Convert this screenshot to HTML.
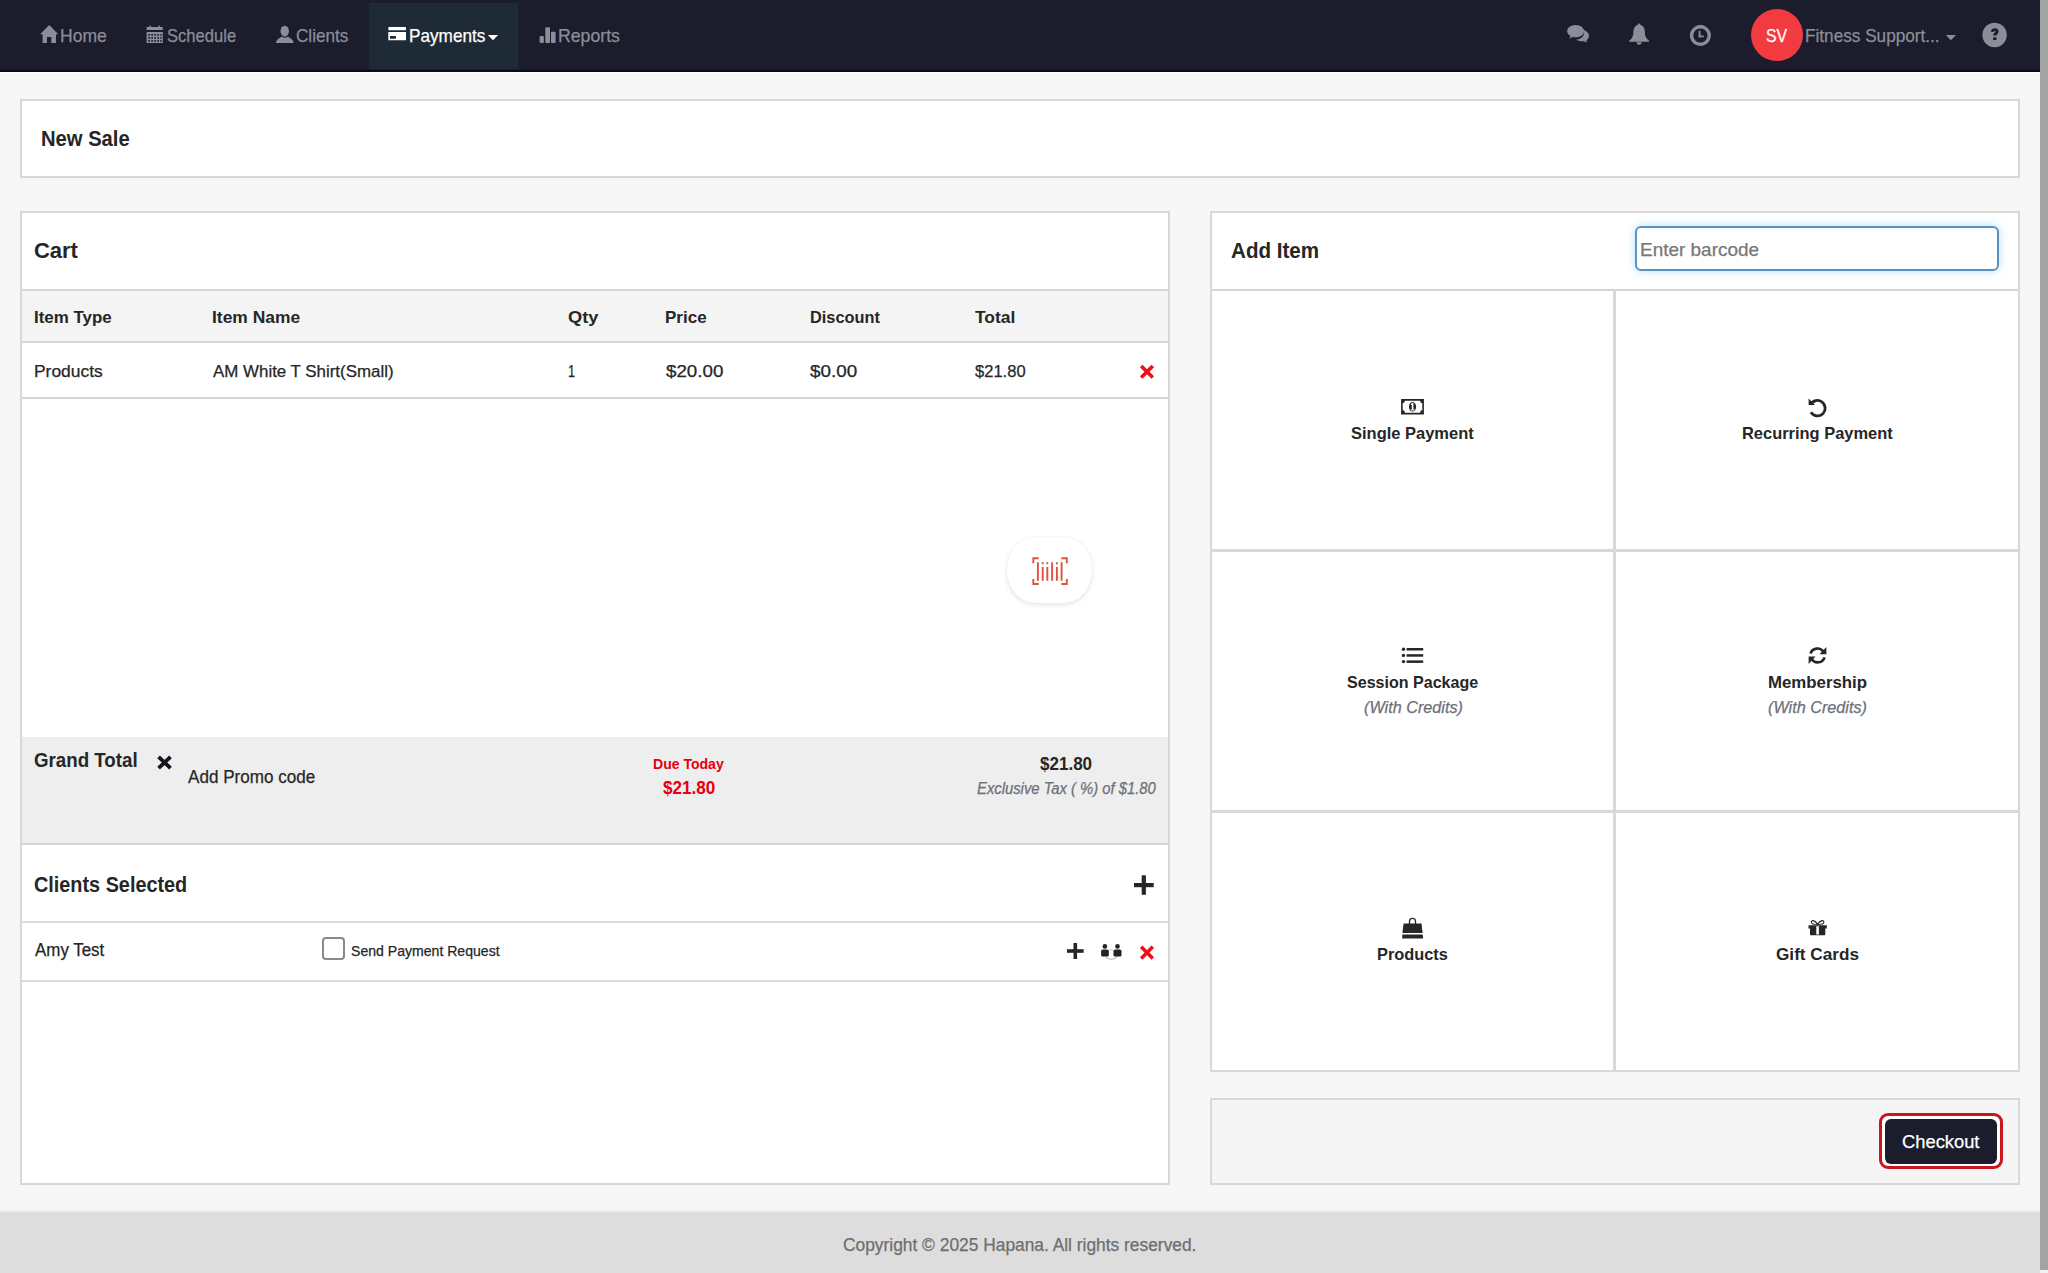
<!DOCTYPE html>
<html><head><meta charset="utf-8"><title>New Sale</title>
<style>
html,body{margin:0;padding:0;width:2048px;height:1273px;overflow:hidden;background:#f7f7f7;font-family:"Liberation Sans",sans-serif;}
.b{position:absolute;box-sizing:border-box;}
.t{position:absolute;white-space:nowrap;transform-origin:0 0;display:block;}
.ic{position:absolute;overflow:visible;}
</style></head><body>
<!-- navbar -->
<div class="b" style="left:0;top:0;width:2040px;height:70px;background:#1b1c2c"></div>
<div class="b" style="left:0;top:70px;width:2040px;height:2px;background:#0b0c16"></div>
<div class="b" style="left:0;top:72px;width:2040px;height:1px;background:#ffffff"></div>
<div class="b" style="left:369px;top:3px;width:149px;height:66px;background:#1f2a37"></div>
<!-- scrollbar -->
<div class="b" style="left:2040px;top:0;width:8px;height:1273px;background:#f1f1f1"></div>
<div class="b" style="left:2040px;top:0;width:8px;height:1270px;background:#a3a3a3"></div>
<!-- New Sale panel -->
<div class="b" style="left:20px;top:99px;width:2000px;height:79px;background:#fff;border:2px solid #d8d8d8"></div>
<!-- Cart panel -->
<div class="b" style="left:20px;top:211px;width:1150px;height:974px;background:#fff;border:2px solid #d8d8d8"></div>
<div class="b" style="left:22px;top:289px;width:1146px;height:2px;background:#d6d6d6"></div>
<div class="b" style="left:22px;top:291px;width:1146px;height:50px;background:#f4f4f4"></div>
<div class="b" style="left:22px;top:341px;width:1146px;height:2px;background:#d6d6d6"></div>
<div class="b" style="left:22px;top:397px;width:1146px;height:2px;background:#d6d6d6"></div>
<div class="b" style="left:22px;top:737px;width:1146px;height:106px;background:#eeeeee"></div>
<div class="b" style="left:22px;top:843px;width:1146px;height:2px;background:#d6d6d6"></div>
<div class="b" style="left:22px;top:921px;width:1146px;height:2px;background:#d9dcdd"></div>
<div class="b" style="left:22px;top:980px;width:1146px;height:2px;background:#d9dcdd"></div>
<!-- barcode button -->
<div class="b" style="left:1007px;top:537px;width:85px;height:66px;border-radius:28px/32px;background:#fff;box-shadow:0 2px 5px rgba(0,0,0,0.10),0 0 2px rgba(0,0,0,0.06)"></div>
<!-- checkbox -->
<div class="b" style="left:322px;top:937px;width:23px;height:23px;border:2.5px solid #8a8a8a;border-radius:4px;background:#fff"></div>
<!-- Add item panel -->
<div class="b" style="left:1210px;top:211px;width:810px;height:861px;background:#fff;border:2px solid #d8d8d8"></div>
<div class="b" style="left:1212px;top:289px;width:806px;height:2px;background:#d6d6d6"></div>
<div class="b" style="left:1613px;top:291px;width:3px;height:779px;background:#d8d8d8"></div>
<div class="b" style="left:1212px;top:549px;width:806px;height:3px;background:#d8d8d8"></div>
<div class="b" style="left:1212px;top:810px;width:806px;height:3px;background:#d8d8d8"></div>
<!-- barcode input -->
<div class="b" style="left:1635px;top:226px;width:364px;height:45px;border:2px solid #5b93bf;border-radius:6px;background:#fff;box-shadow:0 0 8px rgba(102,200,255,0.55)"></div>
<!-- checkout panel -->
<div class="b" style="left:1210px;top:1098px;width:810px;height:87px;background:#f5f5f5;border:2px solid #d8d8d8"></div>
<div class="b" style="left:1879px;top:1113px;width:124px;height:56px;background:#fff;border:3px solid #c8161e;border-radius:9px"></div>
<div class="b" style="left:1885px;top:1119px;width:112px;height:45px;background:#1b1c2c;border-radius:6px"></div>
<!-- footer -->
<div class="b" style="left:0;top:1209px;width:2040px;height:4px;background:linear-gradient(#f7f7f7,#e4e4e4)"></div>
<div class="b" style="left:0;top:1212px;width:2040px;height:61px;background:#dddddd"></div>
<!-- avatar -->
<div class="b" style="left:1751px;top:9px;width:52px;height:52px;border-radius:50%;background:#f23b41"></div>
<svg class="ic" style="left:0;top:0" width="2048" height="1273" viewBox="0 0 2048 1273">
<g fill="#8b8e98">
  <!-- home -->
  <path d="M40 34.3 L49.3 25 L58.2 34.3 L56 34.3 L56 43 L51.2 43 L51.2 37 L47 37 L47 43 L42.6 43 L42.6 34.3 Z"/>
  <!-- calendar -->
  <rect x="146.6" y="27" width="16.2" height="3" rx="0.6"/>
  <rect x="149.3" y="25.6" width="1.6" height="2"/>
  <rect x="158.5" y="25.6" width="1.6" height="2"/>
  <path fill-rule="evenodd" d="M146.6 32 H162.8 V43 H146.6 Z
    M148.3 34 h1.6 v1.8 h-1.6 Z M151.3 34 h1.6 v1.8 h-1.6 Z M154.3 34 h1.6 v1.8 h-1.6 Z M157.3 34 h1.6 v1.8 h-1.6 Z M160.3 34 h1.3 v1.8 h-1.3 Z
    M148.3 37 h1.6 v1.8 h-1.6 Z M151.3 37 h1.6 v1.8 h-1.6 Z M154.3 37 h1.6 v1.8 h-1.6 Z M157.3 37 h1.6 v1.8 h-1.6 Z M160.3 37 h1.3 v1.8 h-1.3 Z
    M148.3 40 h1.6 v1.8 h-1.6 Z M151.3 40 h1.6 v1.8 h-1.6 Z M154.3 40 h1.6 v1.8 h-1.6 Z M157.3 40 h1.6 v1.8 h-1.6 Z M160.3 40 h1.3 v1.8 h-1.3 Z"/>
  <!-- user -->
  <ellipse cx="284.7" cy="31.2" rx="4.2" ry="5.5"/>
  <path d="M281.5 36.5 Q284.7 39 287.9 36.5 L292 39.5 Q293.6 40.7 293.6 43 L276 43 Q276 40.7 277.6 39.5 Z"/>
  <!-- bar chart -->
  <rect x="539.6" y="36" width="4.3" height="7" rx="1"/>
  <rect x="545.3" y="27.3" width="4.7" height="15.7" rx="1"/>
  <rect x="551" y="31.7" width="4.6" height="11.3" rx="1"/>
  <!-- comments -->
  <path d="M1581.5 29.5 C1586 30 1589 33 1589 36 C1589 38 1587.8 39.5 1586.2 40.4 L1587.5 42.2 L1583.2 41.2 C1581 41.6 1578 41.2 1576 39.6 C1580.5 39.5 1584.2 36.5 1584 32.5 C1584 31.5 1582.8 30.2 1581.5 29.5 Z"/>
  <path d="M1575.6 25 C1580.5 25 1584 27.8 1584 31.2 C1584 34.6 1580.5 37.3 1575.6 37.3 C1574.5 37.3 1573.5 37.2 1572.6 37 L1569 38.8 L1570.6 36 C1568.5 34.8 1567.2 33.1 1567.2 31.2 C1567.2 27.8 1570.8 25 1575.6 25 Z"/>
  <!-- bell -->
  <path d="M1639.1 23.5 C1640 23.5 1640.3 24.2 1640.3 24.8 C1643.3 25.6 1644.8 28.3 1644.8 31.5 C1644.8 36 1646 38.5 1649 40.8 L1649 41.8 L1629.2 41.8 L1629.2 40.8 C1632.2 38.5 1633.4 36 1633.4 31.5 C1633.4 28.3 1635 25.6 1637.9 24.8 C1637.9 24.2 1638.2 23.5 1639.1 23.5 Z"/>
  <path d="M1636.6 42.3 A2.5 2.5 0 0 0 1641.6 42.3 Z"/>
  <!-- clock -->
  <path fill-rule="evenodd" d="M1700.4 25 A10.5 10.5 0 1 1 1700.39 25 Z M1700.4 28.4 A7.1 7.1 0 1 0 1700.41 28.4 Z"/>
  <rect x="1698.6" y="30.8" width="1.9" height="6.5"/>
  <rect x="1698.6" y="35.5" width="5.2" height="1.8"/>
  <!-- user caret -->
  <path d="M1945.8 35 L1956 35 L1950.9 40.2 Z"/>
  <!-- help -->
  <circle cx="1994.6" cy="35" r="12.2"/>
</g>
<path d="M1991 31.8 C1991 29.4 1992.6 28.2 1994.8 28.2 C1997.2 28.2 1998.6 29.6 1998.6 31.4 C1998.6 33.4 1996.6 34 1996.4 35.6 L1993.2 35.6 C1993.2 33 1995.4 32.6 1995.4 31.6 C1995.4 31 1995 30.8 1994.7 30.8 C1994.2 30.8 1993.9 31.3 1993.9 32 Z" fill="#1b1c2c"/>
<rect x="1993.1" y="37.4" width="3.4" height="2.6" fill="#1b1c2c"/>
<!-- payments card (white) -->
<g fill="#ffffff">
  <rect x="388.3" y="27" width="17.7" height="3.2" rx="0.8"/>
  <path fill-rule="evenodd" d="M388.3 32 H406 V40.2 H388.3 Z M390 36 H395.9 V38.7 H390 Z"/>
  <path d="M487.8 35 L498.1 35 L493 40.3 Z"/>
</g>
<!-- cart red x -->
<g stroke="#f20d18" stroke-width="3.6" stroke-linecap="butt">
  <path d="M1141.2 366 L1152.8 377.6 M1152.8 366 L1141.2 377.6"/>
  <path d="M1141.2 946.8 L1152.8 958.4 M1152.8 946.8 L1141.2 958.4"/>
</g>
<!-- black x -->
<path d="M158.6 756.8 L170.5 768.2 M170.5 756.8 L158.6 768.2" stroke="#15151f" stroke-width="3.8"/>
<!-- plus icons -->
<g fill="#262626">
  <rect x="1134" y="883" width="19.7" height="4.2"/>
  <rect x="1141.7" y="875.3" width="4.2" height="19.5"/>
  <rect x="1067" y="949.2" width="16.6" height="3.6"/>
  <rect x="1073.5" y="943" width="3.6" height="16"/>
</g>
<!-- group icon -->
<g fill="#222">
  <circle cx="1104.9" cy="946.4" r="2.3"/>
  <circle cx="1117.5" cy="946.4" r="2.3"/>
  <rect x="1101.1" y="949.6" width="7.7" height="6.9" rx="1.6"/>
  <rect x="1113.5" y="949.6" width="8" height="6.9" rx="1.6"/>
</g>
<path d="M1105.5 957 Q1111 961.5 1117 957" fill="none" stroke="#999" stroke-width="0.8"/>
<path d="M1109 950 Q1111 949.2 1113 950" fill="none" stroke="#aaa" stroke-width="0.6"/>
<!-- barcode -->
<g stroke="#e0523d" stroke-width="1.9" fill="none">
  <path d="M1033.3 563.2 V558.2 H1038.7"/>
  <path d="M1033.3 579 V584 H1038.7"/>
  <path d="M1066.8 563.2 V558.2 H1061.4"/>
  <path d="M1066.8 579 V584 H1061.4"/>
  <path d="M1037.9 562.2 V580.7 M1052.1 562.2 V580.7 M1061.6 562.2 V580.7"/>
  <path d="M1042.7 562.2 V564.2 M1042.7 567 V580.7 M1047.3 562.2 V564.2 M1047.3 567 V580.7 M1056.9 562.2 V564.2 M1056.9 567 V580.7"/>
</g>
<!-- grid icons -->
<g fill="#262626">
  <!-- money -->
  <path fill-rule="evenodd" d="M1401.1 399.1 H1423.9 V414.4 H1401.1 Z
     M1405 400.8 H1420 Q1420.5 403 1422.3 403.4 V410.1 Q1420.5 410.5 1420 412.7 H1405 Q1404.5 410.5 1402.7 410.1 V403.4 Q1404.5 403 1405 400.8 Z"/>
  <ellipse cx="1412.5" cy="406.8" rx="3.6" ry="4.8"/>
  <path d="M1411 403.8 L1413.4 402.6 L1413.4 409.4 L1414.6 409.4 L1414.6 410.5 L1410.6 410.5 L1410.6 409.4 L1411.8 409.4 L1411.8 404.8 L1411 405.2 Z" fill="#fff"/>
  <!-- undo -->
  <path d="M1810.6 404.6 A7.7 7.7 0 1 1 1810.9 412.3" fill="none" stroke="#262626" stroke-width="2.7"/>
  <path d="M1808.6 398.6 L1808.6 405 L1815 405 Z"/>
  <!-- list -->
  <circle cx="1403.5" cy="649.2" r="1.7"/>
  <circle cx="1403.5" cy="655.4" r="1.7"/>
  <circle cx="1403.5" cy="661.6" r="1.7"/>
  <rect x="1406.6" y="648" width="16.6" height="2.5"/>
  <rect x="1406.6" y="654.2" width="16.6" height="2.5"/>
  <rect x="1406.6" y="660.4" width="16.6" height="2.5"/>
  <!-- refresh -->
  <path d="M1810.5 653.5 A7.3 7.3 0 0 1 1823.3 651.5" fill="none" stroke="#262626" stroke-width="2.6"/>
  <path d="M1826.4 647 L1826.4 654.2 L1819.5 654.2 Z"/>
  <path d="M1824.6 657.3 A7.3 7.3 0 0 1 1811.7 659.3" fill="none" stroke="#262626" stroke-width="2.6"/>
  <path d="M1808.6 664 L1808.6 656.6 L1815.5 656.6 Z"/>
  <!-- bag -->
  <path d="M1409.5 925 V921.3 A3 3 0 0 1 1415.5 921.3 V925" fill="none" stroke="#262626" stroke-width="1.3"/>
  <path d="M1403.6 923.5 L1421.5 923.5 L1422.6 933 L1402.4 933 Z"/>
  <path d="M1402.3 934.4 L1422.7 934.4 L1423.1 938 Q1423.1 938.6 1422.5 938.6 L1402.7 938.6 Q1402.2 938.6 1402.2 938 Z"/>
  <!-- gift -->
  <path d="M1817.6 924.5 C1815 920 1811 919.5 1811.4 922.5 C1811.6 924 1814 924.5 1817.6 924.5 C1821.2 924.5 1823.6 924 1823.8 922.5 C1824.2 919.5 1820.2 920 1817.6 924.5 Z" fill="none" stroke="#262626" stroke-width="1.2"/>
  <path fill-rule="evenodd" d="M1808.5 925.2 H1826.8 V928.6 H1825.3 V934.6 Q1825.3 935.3 1824.6 935.3 H1810.7 Q1810 935.3 1810 934.6 V928.6 H1808.5 Z M1816.3 926.2 H1818.9 V934.4 H1816.3 Z"/>
</g>
</svg>

<span class="t" style="left:60.33px;top:28.29px;font-size:17.97px;line-height:17.97px;font-weight:400;font-style:normal;color:#8b8e98;transform:scaleX(0.9751);-webkit-text-stroke:0.25px #8b8e98">Home</span>
<span class="t" style="left:167.26px;top:28.29px;font-size:17.97px;line-height:17.97px;font-weight:400;font-style:normal;color:#8b8e98;transform:scaleX(0.9231);-webkit-text-stroke:0.25px #8b8e98">Schedule</span>
<span class="t" style="left:296.14px;top:28.49px;font-size:17.97px;line-height:17.97px;font-weight:400;font-style:normal;color:#8b8e98;transform:scaleX(0.9543);-webkit-text-stroke:0.25px #8b8e98">Clients</span>
<span class="t" style="left:408.66px;top:28.49px;font-size:17.97px;line-height:17.97px;font-weight:400;font-style:normal;color:#ffffff;transform:scaleX(0.9562);-webkit-text-stroke:0.25px #ffffff">Payments</span>
<span class="t" style="left:557.62px;top:28.49px;font-size:17.97px;line-height:17.97px;font-weight:400;font-style:normal;color:#8b8e98;transform:scaleX(0.9846);-webkit-text-stroke:0.25px #8b8e98">Reports</span>
<span class="t" style="left:1765.69px;top:28.49px;font-size:17.97px;line-height:17.97px;font-weight:400;font-style:normal;color:#ffffff;transform:scaleX(0.8842);-webkit-text-stroke:0.25px #ffffff">SV</span>
<span class="t" style="left:1805.26px;top:28.49px;font-size:17.97px;line-height:17.97px;font-weight:400;font-style:normal;color:#8b8e98;transform:scaleX(0.9569);-webkit-text-stroke:0.25px #8b8e98">Fitness Support...</span>
<span class="t" style="left:41.11px;top:127.93px;font-size:21.88px;line-height:21.88px;font-weight:700;font-style:normal;color:#262626;transform:scaleX(0.9232)">New Sale</span>
<span class="t" style="left:34.30px;top:240.45px;font-size:22.03px;line-height:22.03px;font-weight:700;font-style:normal;color:#262626;transform:scaleX(0.9970)">Cart</span>
<span class="t" style="left:1231.23px;top:239.73px;font-size:21.88px;line-height:21.88px;font-weight:700;font-style:normal;color:#262626;transform:scaleX(0.9417)">Add Item</span>
<span class="t" style="left:1639.87px;top:241.00px;font-size:18.55px;line-height:18.55px;font-weight:400;font-style:normal;color:#777777;transform:scaleX(1.0227);-webkit-text-stroke:0.25px #777777">Enter barcode</span>
<span class="t" style="left:34.11px;top:308.82px;font-size:17.10px;line-height:17.10px;font-weight:700;font-style:normal;color:#262626;transform:scaleX(0.9890)">Item Type</span>
<span class="t" style="left:211.78px;top:308.82px;font-size:17.10px;line-height:17.10px;font-weight:700;font-style:normal;color:#262626;transform:scaleX(1.0191)">Item Name</span>
<span class="t" style="left:568.25px;top:308.82px;font-size:17.10px;line-height:17.10px;font-weight:700;font-style:normal;color:#262626;transform:scaleX(1.0649)">Qty</span>
<span class="t" style="left:665.21px;top:308.82px;font-size:17.10px;line-height:17.10px;font-weight:700;font-style:normal;color:#262626;transform:scaleX(0.9945)">Price</span>
<span class="t" style="left:809.55px;top:308.82px;font-size:17.10px;line-height:17.10px;font-weight:700;font-style:normal;color:#262626;transform:scaleX(0.9547)">Discount</span>
<span class="t" style="left:975.40px;top:308.82px;font-size:17.10px;line-height:17.10px;font-weight:700;font-style:normal;color:#262626;transform:scaleX(1.0202)">Total</span>
<span class="t" style="left:33.85px;top:363.77px;font-size:16.81px;line-height:16.81px;font-weight:400;font-style:normal;color:#262626;transform:scaleX(1.0367);-webkit-text-stroke:0.25px #262626">Products</span>
<span class="t" style="left:212.90px;top:363.77px;font-size:16.81px;line-height:16.81px;font-weight:400;font-style:normal;color:#262626;transform:scaleX(1.0058);-webkit-text-stroke:0.25px #262626">AM White T Shirt(Small)</span>
<span class="t" style="left:568.09px;top:363.77px;font-size:16.81px;line-height:16.81px;font-weight:400;font-style:normal;color:#262626;transform:scaleX(0.7568);-webkit-text-stroke:0.25px #262626">1</span>
<span class="t" style="left:666.19px;top:363.77px;font-size:16.81px;line-height:16.81px;font-weight:400;font-style:normal;color:#262626;transform:scaleX(1.1171);-webkit-text-stroke:0.25px #262626">$20.00</span>
<span class="t" style="left:810.49px;top:363.77px;font-size:16.81px;line-height:16.81px;font-weight:400;font-style:normal;color:#262626;transform:scaleX(1.1230);-webkit-text-stroke:0.25px #262626">$0.00</span>
<span class="t" style="left:975.40px;top:363.77px;font-size:16.81px;line-height:16.81px;font-weight:400;font-style:normal;color:#262626;transform:scaleX(0.9848);-webkit-text-stroke:0.25px #262626">$21.80</span>
<span class="t" style="left:33.85px;top:750.37px;font-size:20.00px;line-height:20.00px;font-weight:700;font-style:normal;color:#262626;transform:scaleX(0.9357)">Grand Total</span>
<span class="t" style="left:188.40px;top:768.14px;font-size:18.26px;line-height:18.26px;font-weight:400;font-style:normal;color:#262626;transform:scaleX(0.9360);-webkit-text-stroke:0.25px #262626">Add Promo code</span>
<span class="t" style="left:652.63px;top:757.13px;font-size:14.49px;line-height:14.49px;font-weight:700;font-style:normal;color:#e5000f;transform:scaleX(0.9689)">Due Today</span>
<span class="t" style="left:662.61px;top:780.09px;font-size:17.97px;line-height:17.97px;font-weight:700;font-style:normal;color:#e5000f;transform:scaleX(0.9506)">$21.80</span>
<span class="t" style="left:1040.31px;top:754.54px;font-size:18.26px;line-height:18.26px;font-weight:700;font-style:normal;color:#262626;transform:scaleX(0.9328)">$21.80</span>
<span class="t" style="left:977.02px;top:781.35px;font-size:15.65px;line-height:15.65px;font-weight:400;font-style:italic;color:#6c7078;transform:scaleX(0.9466);-webkit-text-stroke:0.25px #6c7078">Exclusive Tax ( %) of $1.80</span>
<span class="t" style="left:34.05px;top:875.02px;font-size:21.30px;line-height:21.30px;font-weight:700;font-style:normal;color:#262626;transform:scaleX(0.9313)">Clients Selected</span>
<span class="t" style="left:34.80px;top:942.43px;font-size:17.68px;line-height:17.68px;font-weight:400;font-style:normal;color:#262626;transform:scaleX(0.9575);-webkit-text-stroke:0.25px #262626">Amy Test</span>
<span class="t" style="left:351.39px;top:944.62px;font-size:13.91px;line-height:13.91px;font-weight:400;font-style:normal;color:#262626;transform:scaleX(1.0118);-webkit-text-stroke:0.25px #262626">Send Payment Request</span>
<span class="t" style="left:1351.01px;top:425.90px;font-size:16.96px;line-height:16.96px;font-weight:700;font-style:normal;color:#262626;transform:scaleX(0.9729)">Single Payment</span>
<span class="t" style="left:1741.93px;top:426.30px;font-size:16.96px;line-height:16.96px;font-weight:700;font-style:normal;color:#262626;transform:scaleX(0.9701)">Recurring Payment</span>
<span class="t" style="left:1346.92px;top:674.50px;font-size:16.96px;line-height:16.96px;font-weight:700;font-style:normal;color:#262626;transform:scaleX(0.9476)">Session Package</span>
<span class="t" style="left:1364.21px;top:699.71px;font-size:16.52px;line-height:16.52px;font-weight:400;font-style:italic;color:#6c7078;transform:scaleX(0.9817);-webkit-text-stroke:0.25px #6c7078">(With Credits)</span>
<span class="t" style="left:1767.71px;top:675.10px;font-size:16.96px;line-height:16.96px;font-weight:700;font-style:normal;color:#262626;transform:scaleX(0.9928)">Membership</span>
<span class="t" style="left:1767.61px;top:699.71px;font-size:16.52px;line-height:16.52px;font-weight:400;font-style:italic;color:#6c7078;transform:scaleX(0.9817);-webkit-text-stroke:0.25px #6c7078">(With Credits)</span>
<span class="t" style="left:1376.94px;top:947.30px;font-size:16.96px;line-height:16.96px;font-weight:700;font-style:normal;color:#262626;transform:scaleX(0.9658)">Products</span>
<span class="t" style="left:1776.19px;top:947.30px;font-size:16.96px;line-height:16.96px;font-weight:700;font-style:normal;color:#262626;transform:scaleX(1.0145)">Gift Cards</span>
<span class="t" style="left:1902.32px;top:1133.45px;font-size:18.84px;line-height:18.84px;font-weight:400;font-style:normal;color:#ffffff;transform:scaleX(0.9739);-webkit-text-stroke:0.25px #ffffff">Checkout</span>
<span class="t" style="left:842.65px;top:1236.07px;font-size:18.41px;line-height:18.41px;font-weight:400;font-style:normal;color:#6e6e6e;transform:scaleX(0.9432);-webkit-text-stroke:0.25px #6e6e6e">Copyright © 2025 Hapana. All rights reserved.</span>
</body></html>
